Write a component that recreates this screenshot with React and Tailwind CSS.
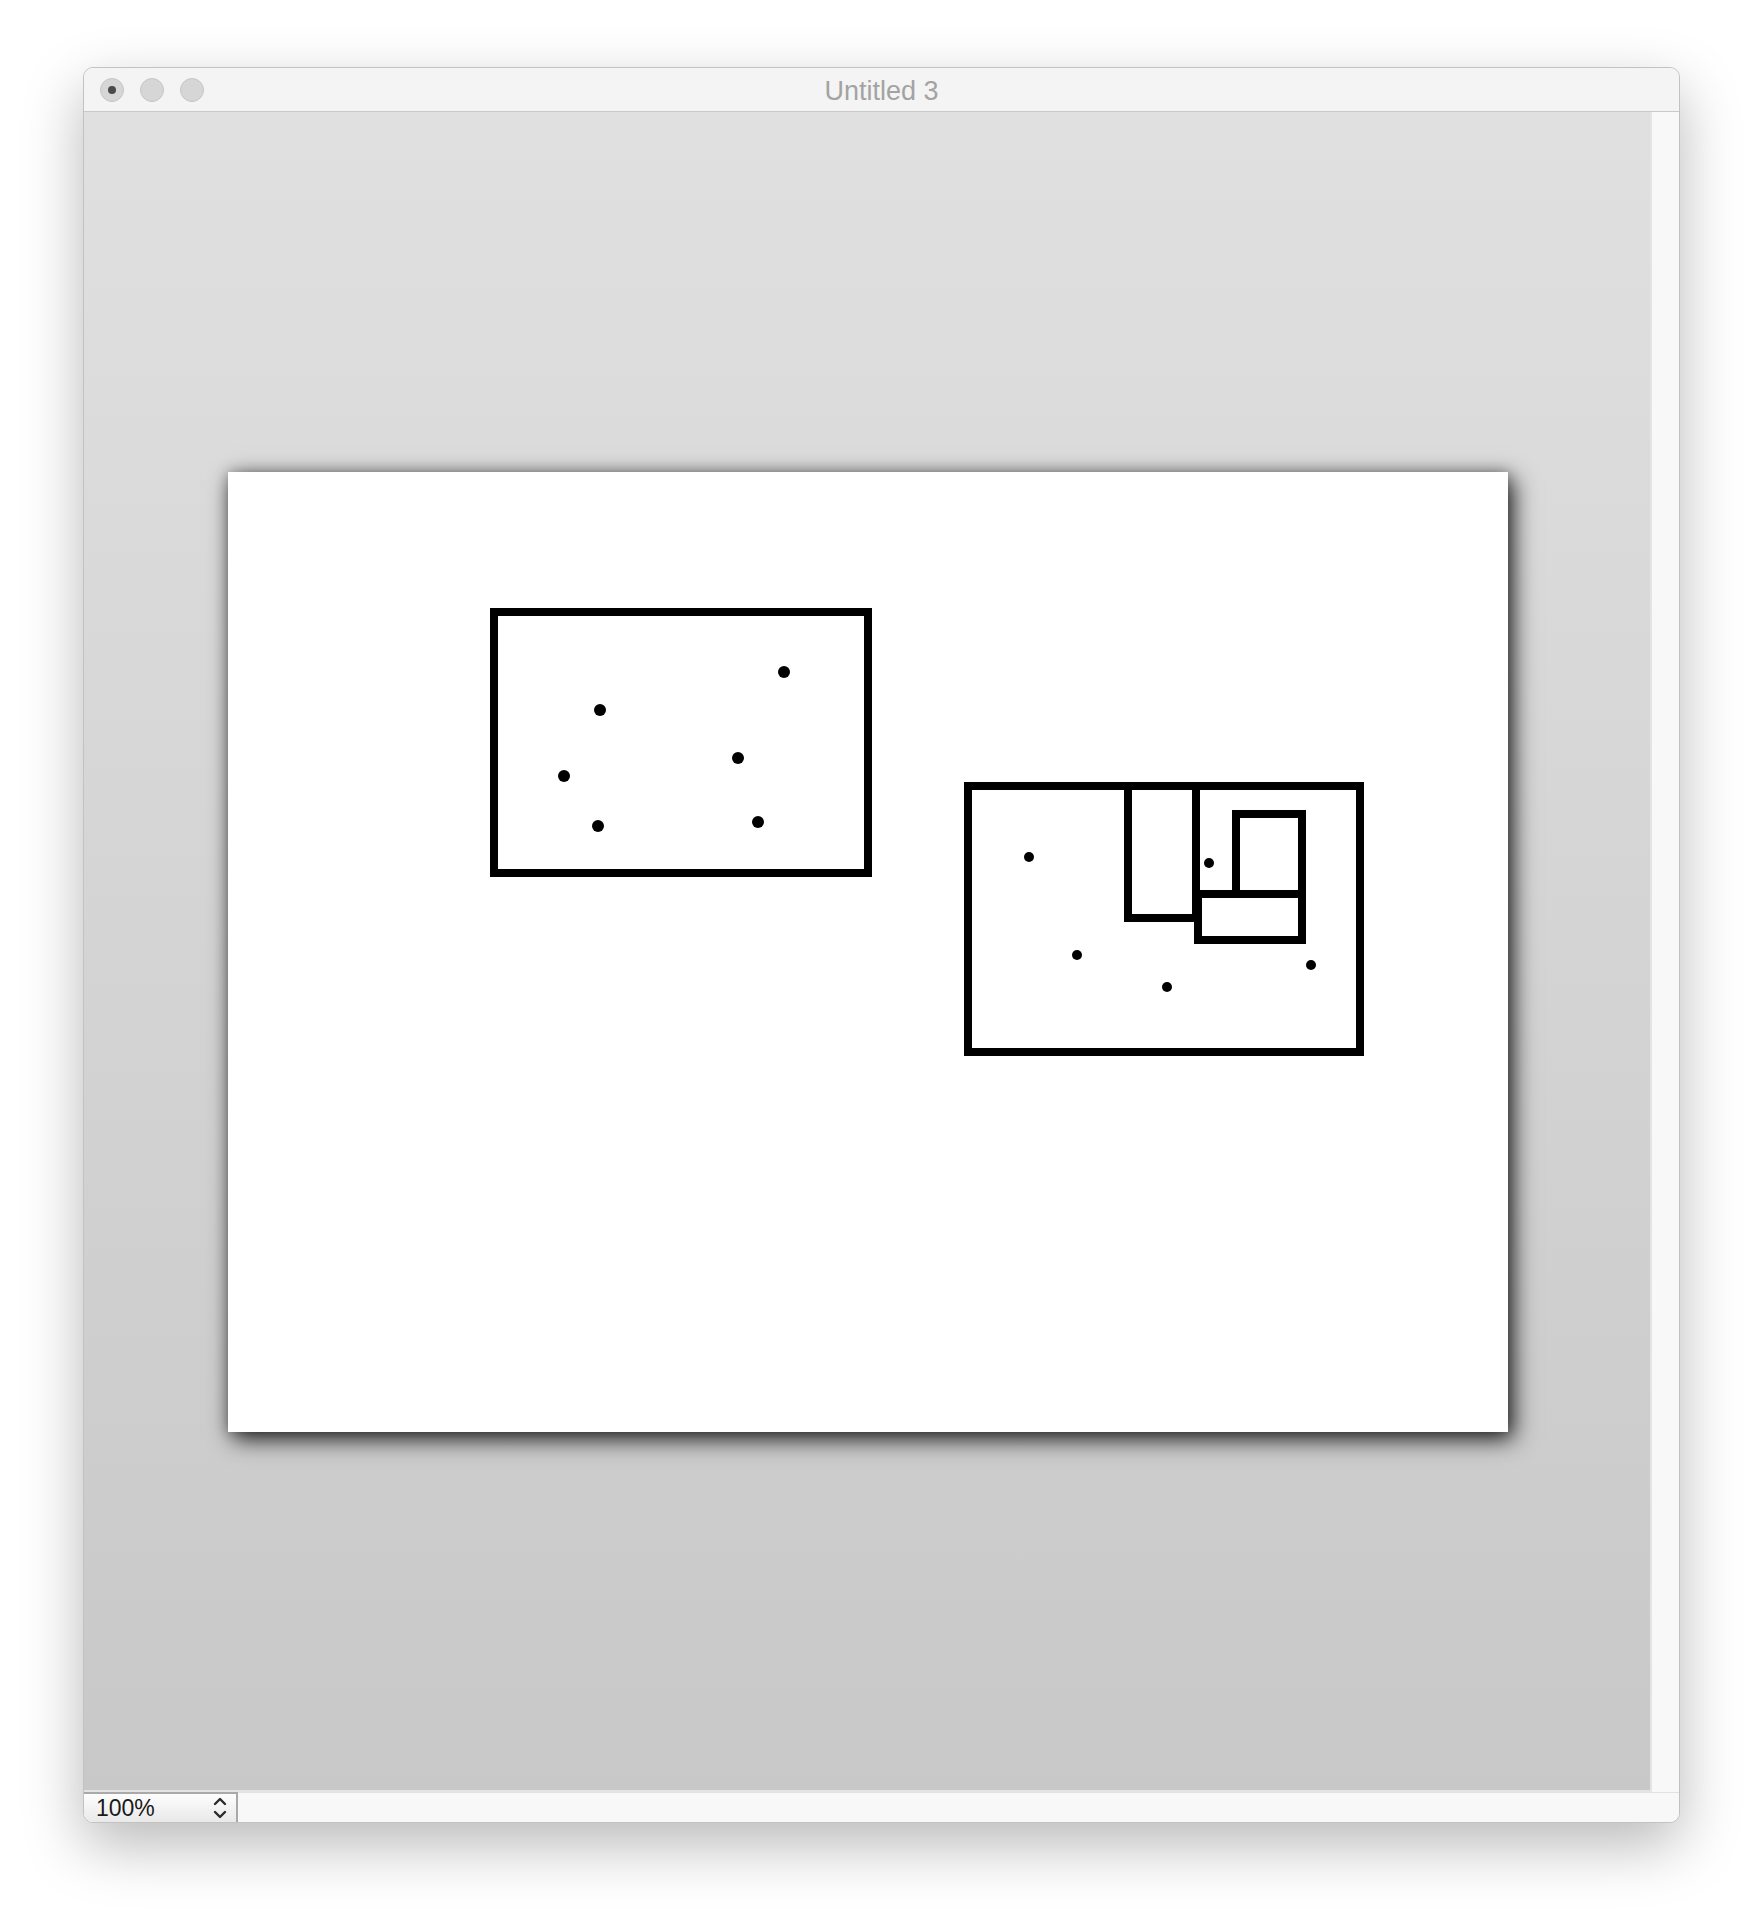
import React from "react";

// dots drawn on the document page (page coords)
const leftDots = [
  [556, 200],
  [372, 238],
  [510, 286],
  [336, 304],
  [370, 354],
  [530, 350],
];

const rightDots = [
  [801, 385],
  [981, 391],
  [849, 483],
  [939, 515],
  [1083, 493],
];

function TrafficLight({ dot }) {
  return (
    <div className="w-[24px] h-[24px] rounded-full bg-[#d6d6d6] border border-[#c6c6c6] flex items-center justify-center">
      {dot && <div className="w-[8px] h-[8px] rounded-full bg-[#4a4a4a]" />}
    </div>
  );
}

function Drawing() {
  return (
    <svg width="1280" height="960" viewBox="0 0 1280 960" className="block">
      <g fill="none" stroke="#000" strokeWidth="8">
        <rect x="266" y="140" width="374" height="261" />
        <rect x="740" y="314" width="392" height="266" />
        <rect x="900" y="314" width="68" height="132" />
        <rect x="970" y="422" width="104" height="46" />
        <rect x="1008" y="342" width="66" height="80" />
      </g>
      <g fill="#000">
        {leftDots.map(([x, y], i) => (
          <circle key={i} cx={x} cy={y} r="6" />
        ))}
        {rightDots.map(([x, y], i) => (
          <circle key={i} cx={x} cy={y} r="5" />
        ))}
      </g>
    </svg>
  );
}

export default function App() {
  return (
    <div className="w-[1764px] h-[1922px] bg-white pt-[67px] pl-[83px] font-['Liberation_Sans',Arial,sans-serif]">
      {/* ================= WINDOW ================= */}
      <div className="w-[1597px] h-[1756px] flex flex-col rounded-[10px] border border-[#c2c2c2] bg-[#f6f6f6] shadow-[0_22px_60px_rgba(0,0,0,0.28)] overflow-hidden">
        {/* title bar */}
        <div className="relative h-[44px] shrink-0 bg-[#f4f4f4] border-b border-[#c9c9c9] flex items-center justify-center">
          <div className="absolute left-[16px] top-[10px] flex gap-[16px]">
            <TrafficLight dot />
            <TrafficLight />
            <TrafficLight />
          </div>
          <span className="text-[27px] text-[#a3a3a3] leading-none mt-[4px]">Untitled 3</span>
        </div>

        {/* content + scroller */}
        <div className="flex-1 flex min-h-0">
          <div className="flex-1 bg-gradient-to-b from-[#e0e0e0] to-[#c8c8c8] pl-[144px] pt-[360px] border-r-2 border-b-2 border-[#e4e4e4]">
            <div className="w-[1280px] h-[960px] bg-white shadow-[5px_7px_22px_rgba(0,0,0,0.85),0_0_12px_rgba(0,0,0,0.25)]">
              <Drawing />
            </div>
          </div>
          <div className="w-[27px] bg-[#f8f8f8]" />
        </div>

        {/* bottom bar */}
        <div className="h-[30px] shrink-0 flex bg-[#f8f8f8]">
          <div className="w-[154px] h-full flex items-center justify-between pl-[12px] pr-[8px] bg-gradient-to-b from-[#fdfdfd] to-[#e9e9e9] border-t-2 border-r-2 border-[#a9a9a9] rounded-bl-[9px]">
            <span className="text-[23px] text-[#1a1a1a] leading-none">100%</span>
            <svg width="16" height="26" viewBox="0 0 16 26" fill="none" stroke="#2a2a2a" strokeWidth="2.4" strokeLinecap="round" strokeLinejoin="round">
              <path d="M3 9 L8 4 L13 9" />
              <path d="M3 17 L8 22 L13 17" />
            </svg>
          </div>
          <div className="flex-1 border-t border-[#e2e2e2]" />
        </div>
      </div>
    </div>
  );
}
